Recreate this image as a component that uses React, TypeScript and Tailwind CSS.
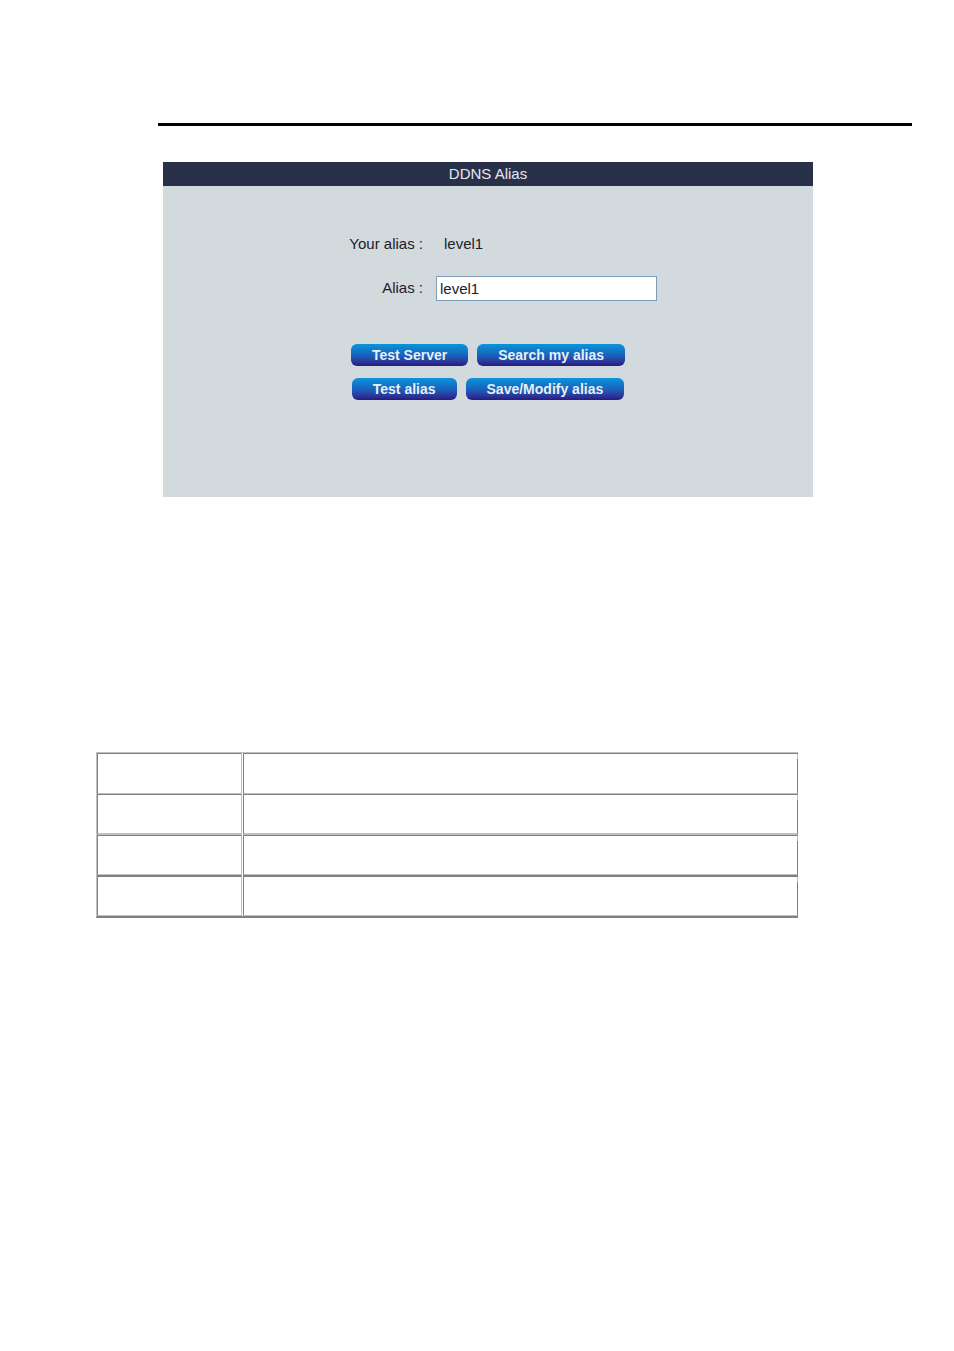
import { useState } from "react";

// The table is a blank form, only its cell heights and rules differ
const rows = [
  "h-[41px] border-t border-b",
  "h-[41px] border-t border-b-2",
  "h-10 border-t border-b",
  "h-[41px] border-t-2 border-b",
];

function PanelButton({ children }: { children: string }) {
  return (
    <button
      type="button"
      className="h-[22px] rounded-md bg-linear-to-b from-[#0a94da] via-[#1763bd] to-[#2a1683] px-[21px] text-sm leading-[22px] font-bold text-[#e6f0f5]"
    >
      {children}
    </button>
  );
}

export default function App() {
  const [alias, setAlias] = useState("level1");

  return (
    <main className="min-h-screen bg-white pt-[123px] font-['Liberation_Sans',Arial,sans-serif]">
      <hr className="mr-[42px] ml-[158px] border-t-3 border-black" />

      {/* DDNS panel */}
      <section className="mt-9 ml-[163px] max-w-[650px] bg-[#d3dadd] pb-[97px] text-[15px] text-[#20202a]">
        <h1 className="h-6 bg-[#28304a] text-center leading-6 text-[#e4e8ee]">
          DDNS Alias
        </h1>

        <form onSubmit={(e) => e.preventDefault()}>
          <div className="mt-[46px] grid grid-cols-[260px_1fr] items-center gap-x-[13px] gap-y-5">
            <span className="text-right">Your alias :</span>
            <output className="h-6 pl-2 leading-6">{alias}</output>

            <label htmlFor="alias" className="text-right">
              Alias :
            </label>
            <input
              id="alias"
              value={alias}
              onChange={(e) => setAlias(e.target.value)}
              className="h-[25px] w-[221px] border border-[#7f9db9] bg-white px-[3px] outline-none"
            />
          </div>

          <div className="mt-[43px] flex flex-col gap-3">
            <div className="flex justify-center gap-[9px]">
              <PanelButton>Test Server</PanelButton>
              <PanelButton>Search my alias</PanelButton>
            </div>
            <div className="flex justify-center gap-[9px]">
              <PanelButton>Test alias</PanelButton>
              <PanelButton>Save/Modify alias</PanelButton>
            </div>
          </div>
        </form>
      </section>

      {/* Blank table */}
      <div className="mt-[255px] ml-24 max-w-[702px]">
        <table className="w-full table-fixed border-separate border-spacing-0 border-t border-b-2 border-l border-t-[#c0c0c0] border-b-[#808080] border-l-[#c0c0c0]">
          <colgroup>
            <col className="w-[145px]" />
            <col />
          </colgroup>
          <tbody>
            {rows.map((row, i) => (
              <tr key={i}>
                <td className="p-0">
                  <div
                    className={`border-r border-l border-t-[#808080] border-r-[#c0c0c0] border-b-[#c0c0c0] border-l-[#808080] ${row}`}
                  />
                </td>
                <td className="border-l border-white p-0">
                  <div
                    className={`relative border-r border-l border-t-[#808080] border-r-[#808080] border-b-[#c0c0c0] border-l-[#808080] after:absolute after:top-0 after:-right-px after:h-[5px] after:w-px after:bg-[#c0c0c0] ${row}`}
                  />
                </td>
              </tr>
            ))}
          </tbody>
        </table>
      </div>
    </main>
  );
}
